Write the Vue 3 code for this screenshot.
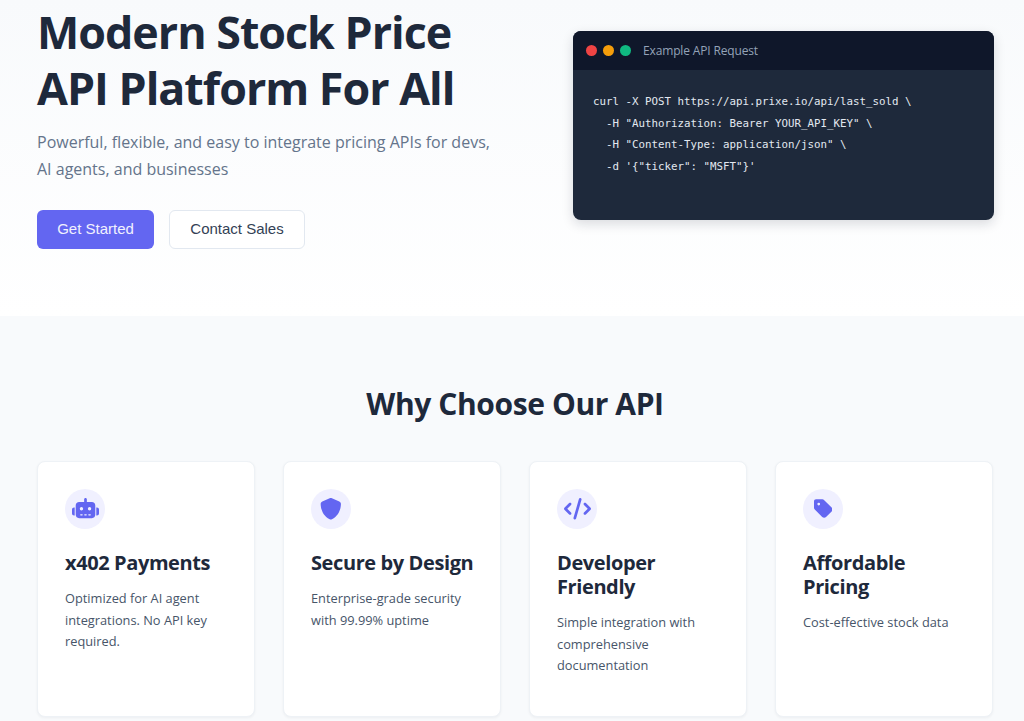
<script setup>
const features = [
  { title: 'x402 Payments', text: 'Optimized for AI agent integrations. No API key required.', box: '0 0 640 512', width: 27, d: 'M320 0c17.7 0 32 14.3 32 32V96H472c44.2 0 80 35.8 80 80V400c0 44.2-35.8 80-80 80H168c-44.2 0-80-35.8-80-80V176c0-44.2 35.8-80 80-80H288V32c0-17.7 14.3-32 32-32zM208 384c-8.8 0-16 7.2-16 16s7.2 16 16 16h32c8.8 0 16-7.2 16-16s-7.2-16-16-16H208zm96 0c-8.8 0-16 7.2-16 16s7.2 16 16 16h32c8.8 0 16-7.2 16-16s-7.2-16-16-16H304zm96 0c-8.8 0-16 7.2-16 16s7.2 16 16 16h32c8.8 0 16-7.2 16-16s-7.2-16-16-16H400zM264 256a40 40 0 1 0 -80 0 40 40 0 1 0 80 0zm152 40a40 40 0 1 0 0-80 40 40 0 1 0 0 80zM48 224H64V416H48c-26.5 0-48-21.5-48-48V272c0-26.5 21.5-48 48-48zm544 0c26.5 0 48 21.5 48 48v96c0 26.5-21.5 48-48 48H576V224h16z' },
  { title: 'Secure by Design', text: 'Enterprise-grade security with 99.99% uptime', box: '0 0 512 512', width: 21.6, d: 'M256 0c4.6 0 9.2 1 13.4 2.9L457.7 82.8c22 9.3 38.4 31 38.3 57.2c-.5 99.2-41.3 280.7-213.6 363.2c-16.7 8-36.1 8-52.8 0C57.3 420.7 16.5 239.2 16 140c-.1-26.2 16.3-47.9 38.3-57.2L242.7 2.9C246.8 1 251.4 0 256 0z' },
  { title: 'Developer Friendly', text: 'Simple integration with comprehensive documentation', box: '0 0 640 512', width: 27, d: 'M392.8 1.2c-17-4.9-34.7 5-39.6 22l-128 448c-4.9 17 5 34.7 22 39.6s34.7-5 39.6-22l128-448c4.9-17-5-34.7-22-39.6zm80.6 120.1c-12.5 12.5-12.5 32.8 0 45.3L562.7 256l-89.4 89.4c-12.5 12.5-12.5 32.8 0 45.3s32.8 12.5 45.3 0l112-112c12.5-12.5 12.5-32.8 0-45.3l-112-112c-12.5-12.5-32.8-12.5-45.3 0zm-306.7 0c-12.5-12.5-32.8-12.5-45.3 0l-112 112c-12.5 12.5-12.5 32.8 0 45.3l112 112c12.5 12.5 32.8 12.5 45.3 0s12.5-32.8 0-45.3L77.3 256l89.4-89.4c12.5-12.5 12.5-32.8 0-45.3z' },
  { title: 'Affordable Pricing', text: 'Cost-effective stock data', box: '0 0 448 512', width: 18.9, d: 'M0 80V229.5c0 17 6.7 33.3 18.7 45.3l176 176c25 25 65.5 25 90.5 0L418.7 317.3c25-25 25-65.5 0-90.5l-176-176c-12-12-28.3-18.7-45.3-18.7H48C21.5 32 0 53.5 0 80zm112 32a32 32 0 1 1 0 64 32 32 0 1 1 0-64z' },
]
</script>

<template>
  <div class="page">
    <section class="hero">
      <div class="hero-copy">
        <h1>Modern Stock Price<br />API Platform For All</h1>
        <p class="lead">Powerful, flexible, and easy to integrate pricing APIs for devs, AI agents, and businesses</p>
        <div class="actions">
          <button class="btn primary">Get Started</button>
          <button class="btn secondary">Contact Sales</button>
        </div>
      </div>
      <div class="code-card">
        <div class="code-head">
          <span class="dot red"></span>
          <span class="dot amber"></span>
          <span class="dot green"></span>
          <span class="code-title">Example API Request</span>
        </div>
        <pre class="code-body">curl -X POST https://api.prixe.io/api/last_sold \
  -H "Authorization: Bearer YOUR_API_KEY" \
  -H "Content-Type: application/json" \
  -d '{"ticker": "MSFT"}'</pre>
      </div>
    </section>
    <section class="features">
      <h2>Why Choose Our API</h2>
      <div class="grid">
        <article v-for="f in features" :key="f.title" class="card">
          <div class="icon">
            <svg :viewBox="f.box" :width="f.width" height="21.6" fill="#6366f1" aria-hidden="true"><path :d="f.d" /></svg>
          </div>
          <h3>{{ f.title }}</h3>
          <p>{{ f.text }}</p>
        </article>
      </div>
    </section>
  </div>
</template>

<style>
html, body { margin: 0; background: #fff; overflow: hidden; }
</style>

<style scoped>
.page {
  height: 721px;
  overflow: hidden;
  font-family: "Open Sans", "Noto Sans", sans-serif;
  background: #fff;
}
.hero {
  box-sizing: border-box;
  height: 316px;
  padding: 4px 30px 0 37px;
  display: grid;
  grid-template-columns: 1fr 421px;
  column-gap: 64px;
  background: linear-gradient(180deg, #f8fafc 0%, #ffffff 100%);
}
h1 {
  margin: 0;
  font-size: 44.8px;
  line-height: 55.5px;
  font-weight: 700;
  letter-spacing: -1px;
  color: #1e293b;
}
.lead {
  margin: 14px 0 0;
  max-width: 460px;
  font-size: 16px;
  line-height: 27px;
  color: #64748b;
}
.actions {
  margin-top: 27px;
  display: flex;
  gap: 15px;
}
.btn {
  height: 39px;
  box-sizing: border-box;
  border-radius: 6px;
  font-family: "Liberation Sans", Arial, sans-serif;
  font-size: 15px;
  padding: 0 0 2px;
}
.primary {
  width: 117px;
  background: #6366f1;
  color: #f1f1fe;
  border: 0;
}
.secondary {
  width: 136px;
  background: #fff;
  color: #334155;
  border: 1px solid #e2e8f0;
}
.code-card {
  margin-top: 27px;
  height: 189px;
  border-radius: 8px;
  overflow: hidden;
  background: #1e293b;
  box-shadow: 0 4px 12px rgba(15, 23, 42, 0.15);
}
.code-head {
  height: 39px;
  padding-left: 13px;
  display: flex;
  align-items: center;
  background: #0f172a;
}
.dot {
  width: 11px;
  height: 11px;
  border-radius: 50%;
  margin-right: 6px;
}
.red { background: #ef4444; }
.amber { background: #f59e0b; }
.green { background: #10b981; }
.code-title {
  margin-left: 6px;
  font-size: 12px;
  letter-spacing: -0.15px;
  color: #94a3b8;
}
.code-body {
  margin: 0;
  padding: 21px 20px;
  font-family: "DejaVu Sans Mono", monospace;
  font-size: 10.8px;
  line-height: 21.6px;
  color: #e2e8f0;
}
.features {
  box-sizing: border-box;
  height: 405px;
  padding: 65px 31px 0 37px;
  background: #f8fafc;
}
h2 {
  margin: 0 0 34px;
  text-align: center;
  font-size: 30px;
  line-height: 46px;
  font-weight: 700;
  letter-spacing: -0.4px;
  color: #1e293b;
}
.grid {
  display: grid;
  grid-template-columns: repeat(4, 1fr);
  gap: 28px;
}
.card {
  box-sizing: border-box;
  height: 256px;
  padding: 27px 20px 27px 27px;
  background: #fff;
  border: 1px solid #eef2f6;
  border-radius: 8px;
  box-shadow: 0 1px 3px rgba(15, 23, 42, 0.05);
}
.icon {
  width: 40px;
  height: 40px;
  border-radius: 50%;
  background: #f0f0ff;
  display: flex;
  align-items: center;
  justify-content: center;
}
h3 {
  margin: 22px 0 0;
  font-size: 20px;
  line-height: 24px;
  font-weight: 700;
  letter-spacing: -0.4px;
  color: #1e293b;
}
.card p {
  margin: 13px 0 0;
  font-size: 12.8px;
  line-height: 21.6px;
  color: #475569;
}
</style>
